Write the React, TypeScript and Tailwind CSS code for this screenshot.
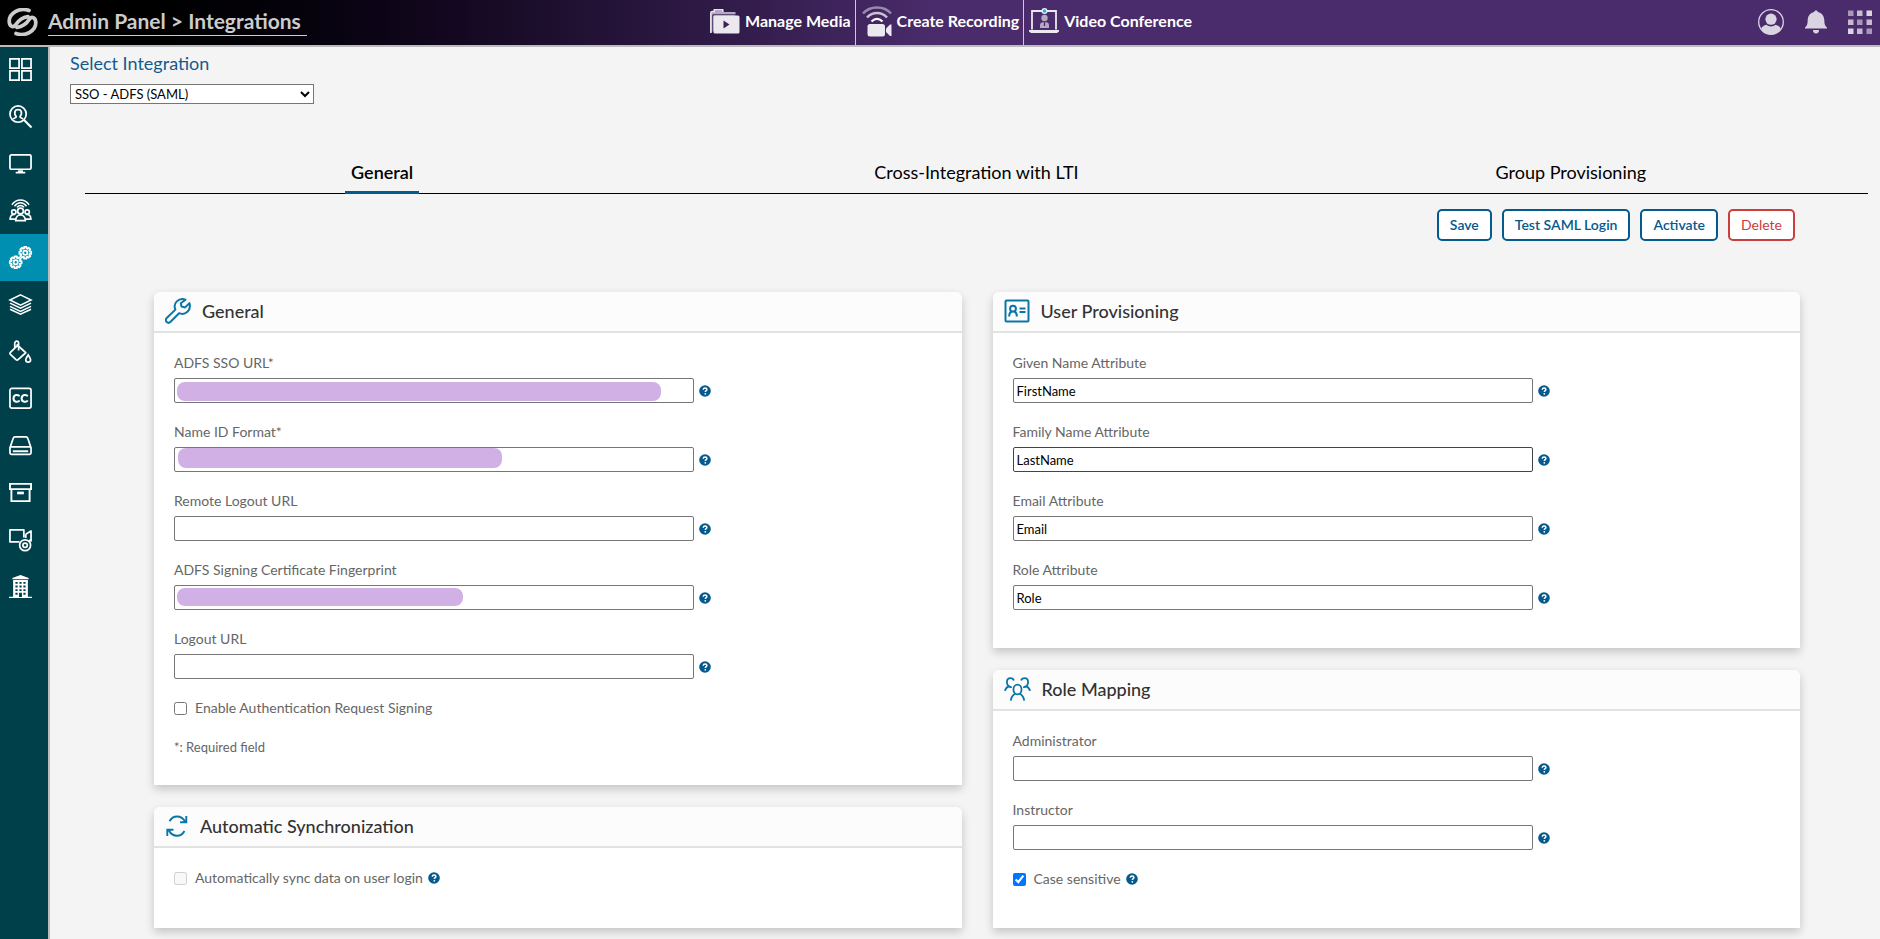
import { useState, type ReactNode } from 'react';

type FieldProps = { id: string; label: string; value?: string; mask?: string; strong?: boolean };

const HelpIcon = () => (
  <svg viewBox="0 0 12 12" className="size-3 shrink-0" aria-hidden="true">
    <circle cx="6" cy="6" r="5.8" fill="#045a8d" />
    <path d="M4.2 4.7C4.3 3.6 5 3 6.1 3s1.8.6 1.8 1.5C7.9 5.7 6.3 5.7 6.3 7" fill="none" stroke="#fff" strokeWidth="1.5" />
    <circle cx="6.3" cy="8.8" r=".9" fill="#fff" />
  </svg>
);

const Help = ({ topic }: { topic: string }) => (
  <button type="button" aria-label={`Help: ${topic}`} className="flex">
    <HelpIcon />
  </button>
);

function Field({ id, label, value = '', mask, strong }: FieldProps) {
  const [text, setText] = useState(value);
  return (
    <div>
      <label htmlFor={id} className="block text-sm leading-[22px] text-[#666]">
        {label}
      </label>
      <div className="mt-1 flex items-center gap-[5px]">
        <div className="relative w-full max-w-[520px]">
          <input
            id={id}
            type="text"
            value={text}
            onChange={(e) => setText(e.target.value)}
            className={`block h-[25px] w-full rounded-[2px] border bg-white px-[3px] text-[13px] text-black ${strong ? 'border-[#444]' : 'border-[#767676]'}`}
          />
          {mask && <span className={`absolute rounded-lg bg-[#d1b0e5] ${mask}`} />}
        </div>
        <Help topic={label} />
      </div>
    </div>
  );
}

function Check({ id, label, disabled, checked, help }: { id: string; label: string; disabled?: boolean; checked?: boolean; help?: boolean }) {
  return (
    <div className="flex h-[22px] items-center">
      <input id={id} type="checkbox" disabled={disabled} defaultChecked={checked} className="mr-2 size-[13px]" />
      <label htmlFor={id} className="mr-[5px] text-sm text-[#666]">
        {label}
      </label>
      {help && <Help topic={label} />}
    </div>
  );
}

function Card({ title, icon, children, className = '' }: { title: string; icon: ReactNode; children: ReactNode; className?: string }) {
  return (
    <section className={`rounded-t-md bg-white shadow-[0_4px_10px_rgba(0,0,0,0.2)] ${className}`}>
      <header className="flex h-[41px] items-center gap-[11px] rounded-t-md border-b-2 border-[#e2e2e2] bg-[#fcfcfc] px-[11px] pb-px">
        {icon}
        <h2 className="text-lg leading-6 font-medium text-[#333]">{title}</h2>
      </header>
      <div className="px-5 pt-[19px]">{children}</div>
    </section>
  );
}

const cardIcon = 'size-[26px] shrink-0 fill-none stroke-[#0a76a8] stroke-2';

const WrenchIcon = () => (
  <svg viewBox="0 0 26 26" className={cardIcon} strokeLinejoin="round">
    <path d="M20.500 1.700c-3-1.200-6.300-.6-8.700 1.700-2.200 2.200-2.700 5.400-1.400 8.200L1.700 20c-1.200 1.200-1.200 2.900 0 4s2.700 1 3.900-.2l8.500-8.600c2.900 1.200 6.100.6 8.300-1.500 2.400-2.300 3-5.600 2-8.600l-4.200 4.300-3.700-.8-.7-3.300z" />
  </svg>
);
const SyncIcon = () => (
  <svg viewBox="0 0 24 26" className="h-[26px] w-6 shrink-0 fill-none stroke-[#0a76a8] stroke-[1.900]">
    <path d="M4.500 8.300C6 5.500 9 3.500 12 3.500c3.600 0 6.500 2 8 5.200M21.300 3v6.200h-6.200M19.500 18c-1.500 2.800-4.500 4.700-7.500 4.700-3.600 0-6.500-2-8-5.200M2.300 23v-6.200h6.200" />
  </svg>
);
const IdCardIcon = () => (
  <svg viewBox="0 0 26 26" className={cardIcon}>
    <rect x="1.500" y="2.500" width="23" height="21" rx="1" />
    <circle cx="9" cy="10.700" r="2.900" />
    <path d="M5.200 18.500c0-2.800 1.200-4.700 3-5M12.800 18.500c0-2.800-1.200-4.700-3-5M15.500 10.500h6M15.500 14h6" />
  </svg>
);
const RolesIcon = () => (
  <svg viewBox="0 0 28 26" className="h-[26px] w-[27px] shrink-0 fill-none stroke-[#0a76a8] stroke-[1.900]">
    <ellipse cx="14" cy="13.500" rx="4.200" ry="5" />
    <path d="M7 25c.5-3.500 2-5.500 4.700-7M21 25c-.5-3.500-2-5.500-4.700-7M10.300 4.200C9.600 2.500 8.300 1.800 6.800 1.800 4.500 1.800 3 3.700 3 6c0 1.800.7 3.200 2 4.200C3 11 1.500 12.600 1 15M5 10.200c1 .8 2 .9 3 .5M17.700 4.200c.7-1.700 2-2.400 3.500-2.400C23.500 1.800 25 3.700 25 6c0 1.800-.7 3.200-2 4.200 2 .8 3.500 2.400 4 4.800M23 10.200c-1 .8-2 .9-3 .5" />
  </svg>
);

// Outline of an eight-toothed gear centred on (cx, cy).
function gearPath(cx: number, cy: number) {
  const points: string[] = [];
  for (let tooth = 0; tooth < 8; tooth += 1) {
    [
      [-0.28, 4.700],
      [-0.2, 6.300],
      [0.2, 6.300],
      [0.28, 4.700],
    ].forEach(([turn, radius]) => {
      const angle = (tooth * Math.PI) / 4 + turn;
      points.push(`${(cx + radius * Math.cos(angle)).toFixed(2)} ${(cy + radius * Math.sin(angle)).toFixed(2)}`);
    });
  }
  return `M${points.join('L')}Z`;
}

const sidebar: { name: string; art: ReactNode }[] = [
  { name: 'Dashboard', art: <path d="M1 1h9.500v9.500H1zM13.500 1H23v9.500h-9.500zM1 13.500h9.500V23H1zM13.500 13.500H23V23h-9.500z" /> },
  {
    name: 'Users',
    art: (
      <>
        <circle cx="9.500" cy="9.500" r="8.500" />
        <path d="M15.700 15.700L23.500 23.500" strokeWidth="2.200" />
        <path d="M4.500 14.800c.5-1.500 3-1 3-2.600C6 10.500 5.700 8.500 6.300 6.500 7 4.200 12 4.200 12.700 6.500c.6 2 .3 4-1.200 5.700 0 1.600 2.500 1.100 3 2.600" />
      </>
    ),
  },
  {
    name: 'Displays',
    art: (
      <>
        <rect x="1" y="3" width="22" height="15" rx="1.500" />
        <path d="M7 21.500h10M9.500 20h5" strokeWidth="1.800" />
      </>
    ),
  },
  {
    name: 'Audience',
    art: (
      <>
        <path d="M3 6C8-.500 16-.500 21 6M5.700 7.500C9.500 2.700 14.500 2.700 18.300 7.500M8.300 8.700c2-2.500 5.400-2.500 7.400 0" strokeWidth="1.500" />
        <circle cx="12" cy="12.500" r="3" />
        <circle cx="5" cy="13.500" r="2.200" />
        <circle cx="19" cy="13.500" r="2.200" />
        <path d="M7 22.500c0-8 10-8 10 0zM6.500 21H1.200c0-4 1.500-5 4.800-5M17.500 21h5.300c0-4-1.500-5-4.800-5" />
      </>
    ),
  },
  {
    name: 'Integrations',
    art: (
      <g strokeLinejoin="round">
        <path d={gearPath(17, 7)} />
        <circle cx="17" cy="7" r="2.200" />
        <path d={gearPath(7, 17)} />
        <circle cx="7" cy="17" r="2.200" />
      </g>
    ),
  },
  {
    name: 'Layers',
    art: <path d="M12 2l11 5.300-11 5.300L1 7.300zM1 10.600l11 5.300 11-5.300M1 13.900l11 5.300 11-5.300M1 17l11 5.200L23 17" strokeWidth="1.600" />,
  },
  {
    name: 'Branding',
    art: (
      <>
        <path d="M8 4.500l9.500 8.800-8 7.200c-.8.7-1.500.6-2.200 0L1.500 15c-.7-.7-.7-1.500 0-2.200L9 5.500M6 9V3.500C6 .5 10 .5 10 3.500V11" strokeLinejoin="round" />
        <path d="M20 15.500c1.700 2.700 2.500 4 2.500 5.200a2.500 2.500 0 01-5 0c0-1.200.8-2.500 2.500-5.200z" />
      </>
    ),
  },
  {
    name: 'Captions',
    art: (
      <>
        <rect x="1" y="1.500" width="22" height="20.500" rx="2" />
        <path d="M11 9.800C10 7.800 4.700 7.500 4.700 12S10 16 11 14M19.500 9.800c-1-2-6.300-2.300-6.300 2.200s5.300 4 6.300 2" strokeWidth="2.100" />
      </>
    ),
  },
  {
    name: 'Storage',
    art: (
      <>
        <path d="M1 14.500L4.300 4.700C4.600 3.700 5.300 3 6.300 3h11.400c1 0 1.700.7 2 1.700L23 14.500v5c0 1-.8 1.700-1.700 1.700H2.700C1.800 21.200 1 20.500 1 19.500zM1 13.500h22" />
        <path d="M4 18h16" strokeWidth="2" />
      </>
    ),
  },
  {
    name: 'Archive',
    art: (
      <>
        <path d="M1 3h22v5.500H1zM2.500 8.500V21h19V8.500" strokeWidth="2" />
        <path d="M8.500 12.500h7" strokeWidth="2.800" />
      </>
    ),
  },
  {
    name: 'Recorders',
    art: (
      <>
        <path d="M11 14.500H1V2h14.500v8M17.500 6.500L23 3v10.500l-2-.8M17.500 6.500v4" strokeLinejoin="round" />
        <circle cx="16.800" cy="18" r="5.700" />
        <circle cx="16.800" cy="18" r="2.300" />
      </>
    ),
  },
  {
    name: 'Organization',
    art: (
      <g stroke="none">
        <path d="M12 0l8.500 3v1.500h-17V3zM4.300 5.300h15.400V22.700H24v1.300H0v-1.300h4.300z" fill="#fff" />
        <path
          d="M6.700 7.200h2.300v2H6.700zM10.900 7.200h2.300v2h-2.300zM15 7.200h2.300v2H15zM6.700 11h2.300v2H6.700zM10.900 11h2.300v2h-2.300zM15 11h2.300v2H15zM6.700 14.800h2.300v2H6.700zM10.900 14.800h2.300v2h-2.300zM15 14.800h2.300v2H15zM6.700 18.600h2.300v2H6.700zM15 18.600h2.300v2H15zM10.500 18.600h3v4.400h-3z"
          fill="#00404b"
        />
      </g>
    ),
  },
];

const tabs = ['General', 'Cross-Integration with LTI', 'Group Provisioning'];

const logoHook = 'M22 2.500C12-1 2.200 5.500 2.200 13.200c0 5 3.800 7 6.300 3.800C11 13 14 9.500 21 8.600';

const navLink = 'flex h-full items-center gap-[5px] pb-[3px] text-base font-bold text-white';
const outlined = 'h-8 rounded-[5px] border-2 bg-white text-sm';
const primary = 'border-[#045a8d] text-[#045a8d] font-semibold';

export default function App() {
  const [tab, setTab] = useState(0);
  return (
    <div className="flex min-h-screen flex-col bg-[#f4f4f4] font-['Lato','Liberation_Sans',sans-serif] text-black">
      <header className="relative z-10 grid h-[45px] grid-cols-[700px_1fr_auto] items-center bg-linear-to-r from-black from-2% to-[#4a2c6c] to-50% pr-2 shadow-[0_2px_0_#bbb]">
        <div className="flex items-center gap-[10px] pb-px pl-[7px]">
          <svg viewBox="0 0 31 28" className="h-7 w-[31px] fill-none stroke-[#ccc]" strokeWidth="3.700" strokeLinecap="round" role="img" aria-label="Home">
            <path d={logoHook} />
            <path d={logoHook} transform="rotate(180 15.500 14)" />
          </svg>
          <h1 className="border-b border-[#ccc] pr-[6px] pb-[2px] text-[21px] leading-6 font-bold text-[#ccc]">Admin Panel &gt; Integrations</h1>
        </div>
        <nav className="flex h-full" aria-label="Media">
          <a href="#media" className={`${navLink} border-r border-[#ccc] pr-1 pl-[10px]`}>
            <svg viewBox="0 0 30 25" className="h-[25px] w-[30px]">
              <path d="M1 24V3.500C1 2.600 1.500 2 2.400 2H4V.5h8.500L14 3h11.500v3" fill="#b4a8c2" />
              <path d="M.8 24V4c0-1 .5-1.500 1.500-1.500h2V.3h8.400v2.400" fill="none" stroke="#e9e5ee" strokeWidth="1.500" />
              <path d="M2.800 24V5.800h23" fill="none" stroke="#3c2457" strokeWidth="1" />
              <rect x="3.500" y="6.500" width="26" height="18" rx="1.500" fill="#ece8f0" />
              <path d="M13.500 11.500v8l6-4z" fill="#3c2457" />
            </svg>
            Manage Media
          </a>
          <a href="#record" className={`${navLink} border-r border-[#ccc] pr-1 pl-[6px]`}>
            <svg viewBox="0 0 30 31" className="h-[31px] w-[30px] fill-none">
              <path d="M1 7.500C8-.500 22-.500 29 7.500" stroke="#9a8aae" strokeWidth="2.500" />
              <path d="M5 11.500c5.500-6 14.500-6 20 0" stroke="#cbc2d5" strokeWidth="2.500" />
              <path d="M9.500 15.500c3.500-3.300 7.500-3.300 11 0" stroke="#fff" strokeWidth="2.300" />
              <rect x="5.500" y="18" width="17.500" height="12.500" rx="2.500" fill="#ece8f0" />
              <path d="M24 22.500l4-4h1.500V30H28l-4-4z" fill="#ece8f0" />
            </svg>
            Create Recording
          </a>
          <a href="#conference" className={`${navLink} pl-[5px]`}>
            <svg viewBox="0 0 30 26" className="h-[26px] w-[30px]">
              <path d="M3 21.500V3h24v18.500" fill="none" stroke="#ece8f0" strokeWidth="1.800" />
              <path d="M0 22h30v1.500L28 25H2l-2-1.500z" fill="#ece8f0" />
              <circle cx="15.500" cy="3" r="3" fill="#dff2fa" />
              <circle cx="15.500" cy="3" r="1.700" fill="#31a5d8" />
              <circle cx="15.500" cy="10" r="3.200" fill="#b4a8c2" />
              <path d="M11 20v-3c0-2 1.500-3 4.500-3s4.500 1 4.500 3v3z" fill="#b4a8c2" />
              <path d="M15.500 14v4" stroke="#4a2c6c" strokeWidth="1.300" />
            </svg>
            Video Conference
          </a>
        </nav>
        <div className="flex items-center gap-[21px] pb-px">
          <button type="button" aria-label="Account">
            <svg viewBox="0 0 26 26" className="size-[26px]">
              <circle cx="13" cy="13" r="12.300" fill="none" stroke="#dad3e2" strokeWidth="1.300" />
              <circle cx="13" cy="10.200" r="5.600" fill="#dad3e2" />
              <path d="M3 20c1-2.500 3-3.500 5.500-4.200 2.500 2.300 6.500 2.300 9 0C20 16.500 22 17.500 23 20c-2 3.400-6 5.300-10 5.300S5 23.400 3 20z" fill="#dad3e2" />
            </svg>
          </button>
          <button type="button" aria-label="Notifications">
            <svg viewBox="0 0 22 24" className="h-6 w-[22px] fill-[#dad3e2]">
              <path d="M11 .5c1 0 1.600.5 1.800 1.500 4 .8 6.200 3.700 6.500 8 .2 4 .3 5.500 2.700 7.500v1H0v-1c2.400-2 2.500-3.500 2.700-7.500C3 5.700 5.200 2.800 9.200 2 9.400 1 10 .5 11 .5zM8 20h6c0 2-1 3.500-3 3.500S8 22 8 20z" />
            </svg>
          </button>
          <button type="button" aria-label="Apps">
            <svg viewBox="0 0 24 24" className="size-6 fill-[#dad3e2]">
              <path d="M18.500.5h5.500V6h-5.500zM0 18.500h5.500V24H0z" />
              <path opacity=".85" d="M9 .5h5.500V6H9zM0 9.500h5.500V15H0zM18.500 9.500H24V15h-5.500zM9 18.500h5.500V24H9z" />
              <path opacity=".65" d="M0 .5h5.500V6H0zM9 9.500h5.500V15H9zM18.500 18.500H24V24h-5.500z" />
            </svg>
          </button>
        </div>
      </header>

      <div className="flex flex-1">
        <nav className="w-12 shrink-0 bg-[#00404b] pt-px shadow-[2px_0_0_#bbb]" aria-label="Admin">
          {sidebar.map(({ name, art }) => (
            <a
              key={name}
              href={`#${name.toLowerCase()}`}
              aria-label={name}
              className={`flex h-[47px] items-center pl-[9px] ${name === 'Integrations' ? 'bg-[#008fb0]' : ''}`}
            >
              <svg viewBox="0 0 24 24" className="size-[23px] overflow-visible fill-none stroke-white" strokeWidth="1.800">
                {art}
              </svg>
            </a>
          ))}
        </nav>

        <main className="min-w-0 flex-1 pt-[5px] pb-8">
          <div className="pl-[22px]">
            <label htmlFor="integration" className="block text-lg leading-[27px] text-[#135b8c]">
              Select Integration
            </label>
            <select id="integration" className="mt-[7px] block h-5 w-[244px] border border-[#767676] bg-white text-[13px]">
              <option>SSO - ADFS (SAML)</option>
            </select>
          </div>

          <div role="tablist" className="mt-[49px] mr-3 ml-[37px] grid grid-cols-3 border-b border-black">
            {tabs.map((name, i) => (
              <div key={name} className="flex h-10 justify-center">
                <button
                  type="button"
                  role="tab"
                  aria-selected={tab === i}
                  onClick={() => setTab(i)}
                  className={`-mb-px border-b-3 px-[6px] pb-[1px] text-lg ${tab === i ? 'border-[#045a8d] font-semibold' : 'border-transparent'}`}
                >
                  {name}
                </button>
              </div>
            ))}
          </div>

          <div className="mt-[15px] mr-[85px] flex justify-end gap-[10px]">
            <button type="button" className={`${outlined} ${primary} px-[11px]`}>Save</button>
            <button type="button" className={`${outlined} ${primary} px-[11px]`}>Test SAML Login</button>
            <button type="button" className={`${outlined} ${primary} px-[11px]`}>Activate</button>
            <button type="button" className={`${outlined} border-[#cc3d3d] px-[11px] text-[#cc3d3d]`}>Delete</button>
          </div>

          <div className="mt-[51px] mr-20 ml-[106px] grid grid-cols-2 gap-[31px]">
            <div className="flex flex-col gap-[22px]">
              <Card title="General" icon={<WrenchIcon />} className="pb-7">
                <div className="flex flex-col gap-[18px]">
                  <Field id="sso-url" label="ADFS SSO URL*" mask="top-1 left-[3px] h-[19px] w-[484px]" />
                  <Field id="name-id" label="Name ID Format*" mask="top-px left-1 h-5 w-[324px]" />
                  <Field id="remote-logout" label="Remote Logout URL" />
                  <Field id="fingerprint" label="ADFS Signing Certificate Fingerprint" mask="top-[3px] left-[3px] h-[18px] w-[286px]" />
                  <Field id="logout" label="Logout URL" />
                  <Check id="signing" label="Enable Authentication Request Signing" />
                  <p className="text-[13px] leading-5 text-[#666]">*: Required field</p>
                </div>
              </Card>
              <Card title="Automatic Synchronization" icon={<SyncIcon />} className="flex-1">
                <Check id="sync" label="Automatically sync data on user login" disabled help />
              </Card>
            </div>
            <div className="flex flex-col gap-[22px]">
              <Card title="User Provisioning" icon={<IdCardIcon />} className="pb-[38px]">
                <div className="flex flex-col gap-[18px]">
                  <Field id="given" label="Given Name Attribute" value="FirstName" />
                  <Field id="family" label="Family Name Attribute" value="LastName" strong />
                  <Field id="email" label="Email Attribute" value="Email" />
                  <Field id="role" label="Role Attribute" value="Role" />
                </div>
              </Card>
              <Card title="Role Mapping" icon={<RolesIcon />} className="pb-[38px]">
                <div className="flex flex-col gap-[18px]">
                  <Field id="administrator" label="Administrator" />
                  <Field id="instructor" label="Instructor" />
                  <Check id="case" label="Case sensitive" checked help />
                </div>
              </Card>
            </div>
          </div>
        </main>
      </div>
    </div>
  );
}
